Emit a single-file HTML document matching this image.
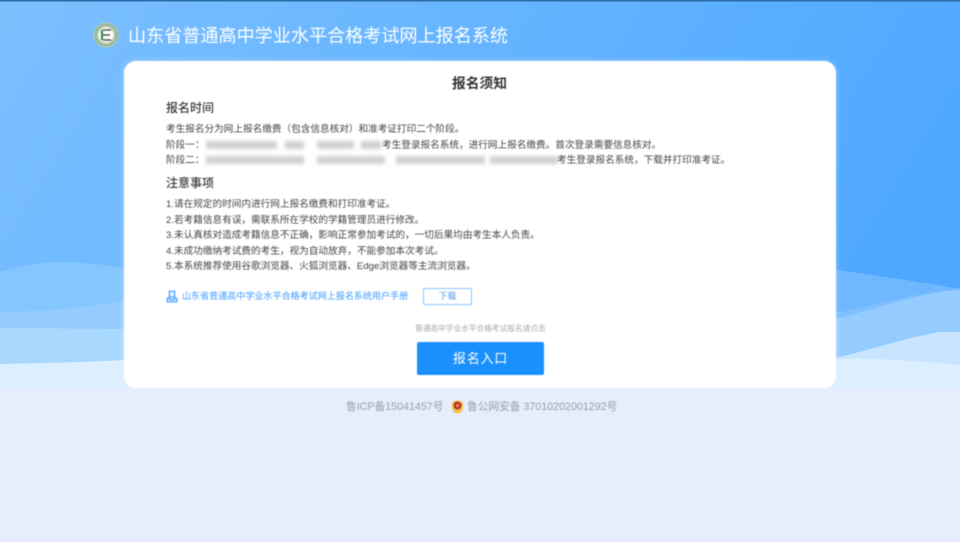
<!DOCTYPE html>
<html lang="zh-CN">
<head>
<meta charset="utf-8">
<title>山东省普通高中学业水平合格考试网上报名系统</title>
<style>
html,body{margin:0;padding:0;}
body{width:960px;height:542px;overflow:hidden;position:relative;background:#e6edfc;font-family:"Liberation Sans","Noto Sans CJK SC",sans-serif;}
.bg{position:absolute;left:0;top:0;}
.root{position:absolute;left:0;top:0;width:960px;height:542px;filter:blur(.45px);}
.t{position:absolute;white-space:nowrap;line-height:16px;}
.b{font-size:9.65px;color:#444;}
.h{font-size:12px;color:#3a3a3a;font-weight:500;}
.card{position:absolute;left:124px;top:61px;width:712px;height:327px;background:#fff;border-radius:12px;box-shadow:0 0 6px rgba(255,255,255,.4);}
.r{position:absolute;height:8px;background:#cfd1d5;filter:blur(1.8px);}
.btn{position:absolute;left:417px;top:342px;width:127px;height:33px;background:#1a90fd;border-radius:2px;color:#fff;font-size:13px;letter-spacing:.8px;line-height:34px;text-align:center;}
.dl{position:absolute;left:423px;top:288px;width:47px;height:15px;border:1px solid #8cc3ff;border-radius:2px;font-size:9px;line-height:15px;text-align:center;color:#4a9cf0;}
.f{font-size:10.7px;color:#9aa0a8;}
</style>
</head>
<body>
<svg class="bg" width="960" height="542" viewBox="0 0 960 542">
<defs>
<linearGradient id="g" x1="0" y1="0" x2="1" y2="0.25">
<stop offset="0" stop-color="#7cc0ff"/>
<stop offset="1" stop-color="#4fa8ff"/>
</linearGradient>
</defs>
<rect width="960" height="390" fill="url(#g)"/>
<path d="M0 272C20 266 40 262 60 262C85 262 105 265 125 268L835 270C880 276 920 282 960 289V390H0Z" fill="#86c6ff"/>
<path d="M835 270C880 276 920 282 960 289V330H835Z" fill="#6fb8ff"/>
<path d="M835 313C880 304 920 292 960 289V330H835Z" fill="#7dbfff"/>
<path d="M0 312C50 312 90 306 125 301L835 319C880 308 920 292 960 290V390H0Z" fill="#94ccff"/>
<path d="M0 328C40 328 90 329 125 329L835 358C870 350 905 338 940 332H960V390H0Z" fill="#a9d8ff"/>
<path d="M835 358C870 350 905 338 940 332H960V370H835Z" fill="#c8e4ff"/>
<path d="M0 364C50 363 90 362 125 360L835 359C880 358 920 361 960 365V388H0Z" fill="#dceffe"/>
<rect x="0" y="388" width="960" height="154" fill="#e6edfc"/>
<rect x="0" y="0" width="960" height="1.5" fill="#2a6ca6"/>
</svg>
<div class="root">
<svg style="position:absolute;left:93px;top:22px" width="26" height="26" viewBox="0 0 26 26">
<circle cx="13" cy="13" r="12.5" fill="#b9d0b4"/>
<circle cx="13" cy="13" r="10.5" fill="none" stroke="#7f9e80" stroke-width="2" stroke-dasharray="1.5 1"/>
<circle cx="13" cy="13" r="7.5" fill="#fff"/>
<path d="M10 8H18M10 13H17M10 18H18" stroke="#555" stroke-width="1.6" fill="none"/>
<path d="M9 8V18" stroke="#2f8a3a" stroke-width="2" fill="none"/>
</svg>
<div class="t" style="left:128px;top:25px;font-size:18.1px;line-height:22px;color:#fff;">山东省普通高中学业水平合格考试网上报名系统</div>
<div class="card"></div>
<div class="t" style="left:452px;top:76px;font-size:13.75px;font-weight:700;color:#333;">报名须知</div>
<div class="t h" style="left:166px;top:100px;">报名时间</div>
<div class="t b" style="left:166px;top:122px;">考生报名分为网上报名缴费（包含信息核对）和准考证打印二个阶段。</div>
<div class="t b" style="left:166px;top:138px;">阶段一：</div>
<div class="r" style="left:206px;top:141px;width:71px;"></div>
<div class="r" style="left:285px;top:141px;width:19px;"></div>
<div class="r" style="left:317px;top:141px;width:37px;"></div>
<div class="r" style="left:361px;top:141px;width:20px;"></div>
<div class="t b" style="left:382px;top:138px;">考生登录报名系统，进行网上报名缴费。首次登录需要信息核对。</div>
<div class="t b" style="left:166px;top:153px;">阶段二：</div>
<div class="r" style="left:206px;top:156px;width:98px;"></div>
<div class="r" style="left:317px;top:156px;width:68px;"></div>
<div class="r" style="left:396px;top:156px;width:89px;"></div>
<div class="r" style="left:490px;top:156px;width:68px;"></div>
<div class="t b" style="left:557px;top:153px;">考生登录报名系统，下载并打印准考证。</div>
<div class="t h" style="left:166px;top:175px;">注意事项</div>
<div class="t b" style="left:166px;top:197px;">1.请在规定的时间内进行网上报名缴费和打印准考证。</div>
<div class="t b" style="left:166px;top:213px;">2.若考籍信息有误，需联系所在学校的学籍管理员进行修改。</div>
<div class="t b" style="left:166px;top:228px;">3.未认真核对造成考籍信息不正确，影响正常参加考试的，一切后果均由考生本人负责。</div>
<div class="t b" style="left:166px;top:244px;">4.未成功缴纳考试费的考生，视为自动放弃，不能参加本次考试。</div>
<div class="t b" style="left:166px;top:259px;">5.本系统推荐使用谷歌浏览器、火狐浏览器、Edge浏览器等主流浏览器。</div>
<svg style="position:absolute;left:166px;top:290px" width="12" height="13" viewBox="0 0 12 13">
<path d="M3.4 1.2H8.6V7.2H3.4Z" fill="#e6f2ff" stroke="#3a9bff" stroke-width="1.2" stroke-linejoin="round"/>
<path d="M1.2 8.2H3.4C3.6 9.2 4.6 9.8 6 9.8S8.4 9.2 8.6 8.2H10.8V11.8H1.2Z" fill="#e6f2ff" stroke="#3a9bff" stroke-width="1.2" stroke-linejoin="round"/>
</svg>
<div class="t" style="left:182px;top:288px;font-size:9.05px;color:#3a9bff;">山东省普通高中学业水平合格考试网上报名系统用户手册</div>
<div class="dl">下载</div>
<div class="t" style="left:415px;top:321px;font-size:7.7px;color:#a8a8a8;">普通高中学业水平合格考试报名请点击</div>
<div class="btn">报名入口</div>
<div class="t f" style="left:346px;top:399px;">鲁ICP备15041457号</div>
<svg style="position:absolute;left:451px;top:400px" width="13" height="14" viewBox="0 0 13 14">
<path d="M1 4C1 2 3.5.5 6.5.5S12 2 12 4V8C12 11 9 13.5 6.5 13.5S1 11 1 8Z" fill="#f0c04a"/>
<circle cx="6.5" cy="5.5" r="4" fill="#b8322a"/>
<circle cx="6.5" cy="5.5" r="1.5" fill="#e8a050"/>
</svg>
<div class="t f" style="left:467px;top:399px;">鲁公网安备 37010202001292号</div>
</div>
</body>
</html>
